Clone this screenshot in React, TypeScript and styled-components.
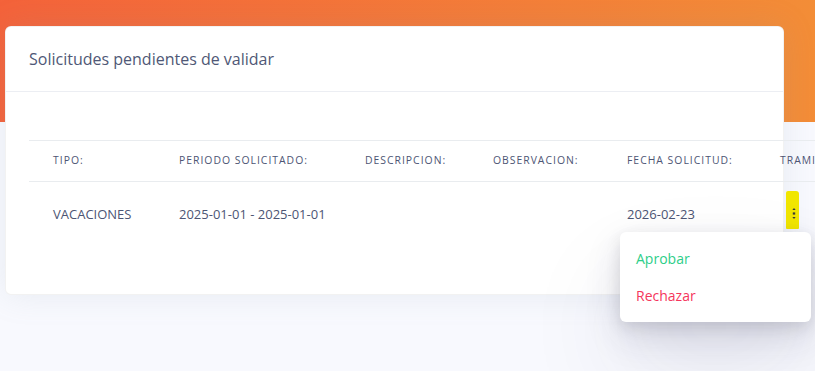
import styled, { createGlobalStyle } from 'styled-components';
import { FC } from 'react';

const GlobalStyle = createGlobalStyle`
  html, body {
    margin: 0;
    padding: 0;
  }
  body {
    background: #f8f9fe;
    font-family: "Open Sans", "Noto Sans", sans-serif;
    color: #525f7f;
    overflow: hidden;
  }
`;

const Page = styled.div`
  min-height: 100vh;
  padding: 26px 31px 0 5px;
  box-sizing: border-box;
  background:
    linear-gradient(87deg, #f4623a 0%, #f38d37 100%) top left / 100% 122px no-repeat,
    #f8f9fe;
`;

const Card = styled.div`
  background: #fff;
  border: 1px solid rgba(0, 0, 0, 0.05);
  border-radius: 6px;
  box-shadow: 0 0 2rem 0 rgba(136, 152, 170, 0.15);
`;

const CardHeader = styled.div`
  padding: 20px 23px 19px;
  border-bottom: 1px solid #eceef3;
`;

const Title = styled.h3`
  margin: 0;
  font-size: 16px;
  line-height: 25px;
  font-weight: 400;
  color: #4f5876;
`;

const CardBody = styled.div`
  padding: 48px 0 48px 23px;
`;

const Table = styled.table`
  border-collapse: collapse;
  table-layout: fixed;
  width: 847px;
  white-space: nowrap;
`;

const HeadCell = styled.th<{ $w: number }>`
  width: ${(p) => p.$w}px;
  box-sizing: border-box;
  padding: 12px 24px 13px;
  font-size: 10.4px;
  line-height: 15px;
  font-weight: 400;
  letter-spacing: 1px;
  text-transform: uppercase;
  text-align: left;
  color: #4d5574;
  border-top: 1px solid #e9ecef;
  border-bottom: 1px solid #e9ecef;
`;

const Cell = styled.td`
  padding: 0 24px;
  height: 64px;
  font-size: 13px;
  color: #4d5574;
  vertical-align: middle;
`;

const ActionCell = styled(Cell)`
  vertical-align: top;
  padding-top: 9px;
  height: 55px;
`;

const ActionWrap = styled.div`
  position: relative;
  display: inline-block;
  margin-left: 6px;
`;

const KebabButton = styled.button`
  display: flex;
  align-items: center;
  justify-content: flex-end;
  width: 13px;
  height: 38px;
  padding: 6px 3px 0 0;
  border: none;
  border-radius: 2px 3px 1px 1px;
  background: #f1e600;
  color: #3a3a3a;
  cursor: pointer;
`;

const Menu = styled.div`
  position: absolute;
  top: calc(100% + 3px);
  right: -12px;
  width: 191px;
  padding: 8px 0;
  background: #fff;
  border-radius: 6px;
  box-shadow: 0 50px 100px rgba(50, 50, 93, 0.1), 0 15px 35px rgba(50, 50, 93, 0.15),
    0 5px 15px rgba(0, 0, 0, 0.1);
  box-sizing: border-box;
  z-index: 10;
`;

const MenuItem = styled.a<{ $tone: string }>`
  display: block;
  padding: 8px 16px;
  font-size: 14px;
  line-height: 21px;
  color: ${(p) => p.$tone};
  text-decoration: none;
  cursor: pointer;
`;

const columns: { label: string; w: number }[] = [
  { label: 'Tipo:', w: 126 },
  { label: 'Periodo solicitado:', w: 186 },
  { label: 'Descripcion:', w: 128 },
  { label: 'Observacion:', w: 134 },
  { label: 'Fecha solicitud:', w: 153 },
  { label: 'Tramitar:', w: 120 },
];

const KebabIcon: FC = () => (
  <svg width="4" height="11" viewBox="0 0 4 11" fill="currentColor">
    <path d="M2 0 L3.6 2 H0.4 Z" />
    <rect x="0.8" y="4.4" width="2.4" height="2.2" />
    <path d="M2 11 L3.6 9 H0.4 Z" />
  </svg>
);

const App: FC = () => {
  return (
    <>
      <GlobalStyle />
      <Page>
        <Card>
          <CardHeader>
            <Title>Solicitudes pendientes de validar</Title>
          </CardHeader>
          <CardBody>
            <Table>
              <thead>
                <tr>
                  {columns.map((c) => (
                    <HeadCell key={c.label} $w={c.w}>
                      {c.label}
                    </HeadCell>
                  ))}
                </tr>
              </thead>
              <tbody>
                <tr>
                  <Cell>VACACIONES</Cell>
                  <Cell>2025-01-01 - 2025-01-01</Cell>
                  <Cell></Cell>
                  <Cell></Cell>
                  <Cell>2026-02-23</Cell>
                  <ActionCell>
                    <ActionWrap>
                      <KebabButton aria-label="Acciones">
                        <KebabIcon />
                      </KebabButton>
                      <Menu>
                        <MenuItem $tone="#2dce89">Aprobar</MenuItem>
                        <MenuItem $tone="#f5365c">Rechazar</MenuItem>
                      </Menu>
                    </ActionWrap>
                  </ActionCell>
                </tr>
              </tbody>
            </Table>
          </CardBody>
        </Card>
      </Page>
    </>
  );
};

export default App;
